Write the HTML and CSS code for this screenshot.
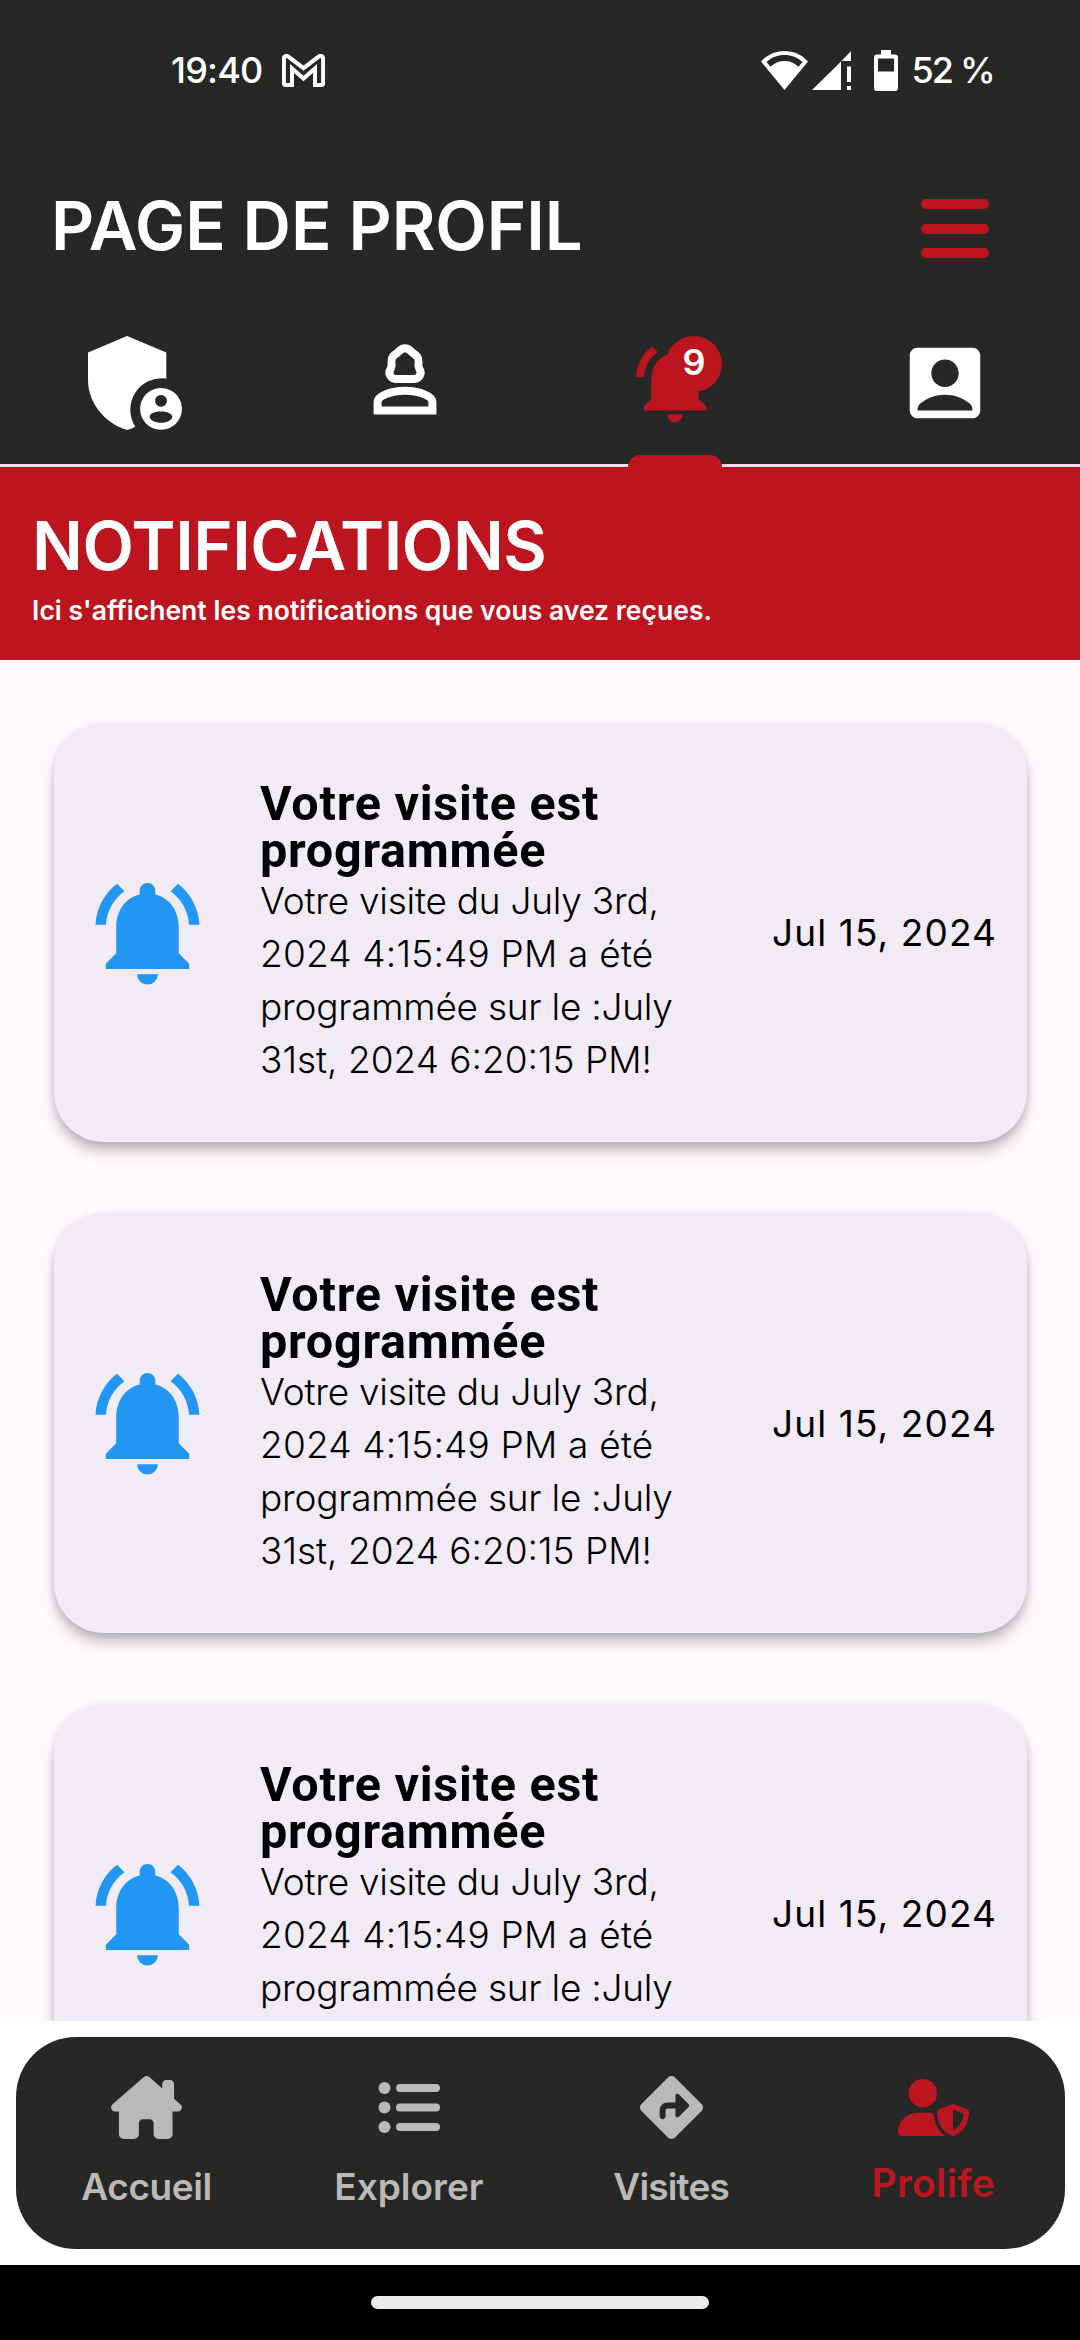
FILE: index.html
```html
<!DOCTYPE html>
<html lang="fr">
<head>
<meta charset="utf-8">
<title>Page de profil</title>
<link rel="stylesheet" href="styles.css">
</head>
<body>
<svg width="0" height="0" class="defs" aria-hidden="true">
  <symbol id="bell" viewBox="0 0 24 24">
    <path d="M7.58 4.08L6.15 2.65C3.75 4.48 2.17 7.3 2.03 10.5h2c.15-2.65 1.51-4.97 3.55-6.42zM19.97 10.5h2c-.15-3.2-1.73-6.02-4.12-7.85l-1.42 1.43c2.02 1.45 3.39 3.77 3.54 6.42zM18 11c0-3.07-1.64-5.64-4.5-6.32V4c0-.83-.67-1.5-1.5-1.5s-1.5.67-1.5 1.5v.68C7.63 5.36 6 7.92 6 11v5l-2 2v1h16v-1l-2-2v-5zM10 20h4a2 2 0 0 1-4 0z"/>
  </symbol>
</svg>
<div class="screen">
  <header class="top">
    <div class="status">
      <div class="status-group">
        <span class="clock">19:40</span>
        <svg class="gmail" viewBox="0 0 43 33"><path d="M4.6 1.9Q1.9 1.9 1.9 5V29Q1.9 31.1 4 31.1H10V14.5L21.5 24.5 33 14.5V31.1H39Q41.1 31.1 41.1 29V5Q41.1 1.9 38.4 1.9L37 2.4 21.5 14.2 6 2.4Z"/></svg>
      </div>
      <div class="status-group">
        <svg class="wifi" viewBox="0 0 47 39"><path fill-rule="evenodd" d="M23.5 39L0 10.5C6 4 14 0 23.5 0S41 4 47 10.5ZM5.5 11L9.5 15.8C13.5 12 18 10 23.5 10S33.500 12 37.500 15.800L41.500 11C36.500 6.500 30.500 4 23.500 4S10.500 6.500 5.500 11Z"/></svg>
        <svg class="signal" viewBox="0 0 39 39"><path d="M0 39L29 10.500V39ZM29.500 10L39 0V10ZM35 15.500h4V31h-4ZM35 35h4v4h-4Z"/></svg>
        <svg class="battery" viewBox="0 0 24 41"><path fill-rule="evenodd" d="M7 0h10v4.500h4a3 3 0 0 1 3 3V38a3 3 0 0 1-3 3H3a3 3 0 0 1-3-3V7.500a3 3 0 0 1 3-3h4ZM4 8.500V21.500H20V8.500Z"/></svg>
        <span class="percent">52 %</span>
      </div>
    </div>
    <div class="appbar">
      <h1 class="page-title">PAGE DE PROFIL</h1>
      <div class="burger"><i></i><i></i><i></i></div>
    </div>
    <nav class="tabs">
      <div class="tab">
        <svg class="tab-icon" viewBox="0 0 94 94"><path d="M39 0L78.300 16.500V42.600A31.500 31.500 0 0 0 47.300 90.800Q43 93 39 94C16 87 0 66 0 44V16.500Z"/><path fill-rule="evenodd" d="M73 52a20.900 20.900 0 1 0 .01 0ZM73 58.900a5.900 5.900 0 1 1-.01 0ZM73 75.500c6 0 11.300 2 11.300 5.200S79 86.800 73 86.800 61.700 84 61.700 80.700 67 75.500 73 75.500Z"/></svg>
      </div>
      <div class="tab">
        <svg class="tab-icon line" viewBox="0 0 94 94"><path d="M47 12.200C50.500 12.200 52 14 54 16.300 59 19.500 61 21.500 60.500 26.500 59.800 30.500 60.500 31 61.500 33 64.500 38 61 43 55.500 43H38.500C33 43 29.500 38 32.500 33 33.500 31 34.200 30.500 33.500 26.500 33 21.500 35 19.500 40 16.300 42 14 43.500 12.200 47 12.200Z"/><path d="M19.600 74.400V66C19.600 60 33 54.700 47 54.700S74.400 60 74.400 66V74.400Z"/></svg>
      </div>
      <div class="tab active">
        <svg class="tab-icon"><use href="#bell"/></svg>
        <span class="badge">9</span>
      </div>
      <div class="tab">
        <svg class="tab-icon" viewBox="0 0 24 24"><path d="M19 3H5c-1.110 0-2 .9-2 2v14c0 1.100.89 2 2 2h14c1.100 0 2-.9 2-2V5c0-1.100-.9-2-2-2zm-7 3c1.930 0 3.500 1.570 3.500 3.500S13.930 13 12 13s-3.500-1.570-3.500-3.500S10.070 6 12 6zm7 13H5v-.23c0-.62.28-1.200.76-1.580C7.470 15.820 9.640 15 12 15s4.530.82 6.240 2.190c.48.38.76.97.76 1.580V19z"/></svg>
      </div>
    </nav>
  </header>

  <section class="banner">
    <h2 class="banner-title">NOTIFICATIONS</h2>
    <p class="banner-text">Ici s'affichent les notifications que vous avez reçues.</p>
  </section>

  <main class="list">
    <article class="card">
      <svg class="card-icon"><use href="#bell"/></svg>
      <div class="card-body">
        <h3 class="card-title">Votre visite est<br>programmée</h3>
        <p class="card-text"><span class="tight">Votre visite du July 3rd,</span><span class="wide">2024 4:15:49 PM a été</span><span class="tight">programmée sur le :July</span><span>31st, 2024 6:20:15 PM!</span></p>
      </div>
      <time class="card-date">Jul 15, 2024</time>
    </article>
    <article class="card">
      <svg class="card-icon"><use href="#bell"/></svg>
      <div class="card-body">
        <h3 class="card-title">Votre visite est<br>programmée</h3>
        <p class="card-text"><span class="tight">Votre visite du July 3rd,</span><span class="wide">2024 4:15:49 PM a été</span><span class="tight">programmée sur le :July</span><span>31st, 2024 6:20:15 PM!</span></p>
      </div>
      <time class="card-date">Jul 15, 2024</time>
    </article>
    <article class="card">
      <svg class="card-icon"><use href="#bell"/></svg>
      <div class="card-body">
        <h3 class="card-title">Votre visite est<br>programmée</h3>
        <p class="card-text"><span class="tight">Votre visite du July 3rd,</span><span class="wide">2024 4:15:49 PM a été</span><span class="tight">programmée sur le :July</span></p>
      </div>
      <time class="card-date">Jul 15, 2024</time>
    </article>
  </main>

  <footer class="dock">
    <nav class="nav">
      <div class="nav-item">
        <svg class="nav-icon" width="71" height="63" viewBox="0 0 576 512"><path d="M543.800 287.600c17 0 32-14 32-32.100c1-9-3-17-11-24L512 185V64c0-17.700-14.300-32-32-32H448c-17.700 0-32 14.300-32 32v36.700L309.500 7c-6-5-14-7-21-7s-15 1-22 8L10 231.500c-7 7-10 15-10 24c0 18 14 32.100 32 32.100h32V472c0 22 18 40 40 40h82c22 0 40-18 40-40V384c0-18 14-32 32-32h56c18 0 32 14 32 32v88c0 22 18 40 40 40h74c22 0 40-18 40-40l-.7-184.400h34.500z"/></svg>
        <span class="nav-label accueil">Accueil</span>
      </div>
      <div class="nav-item">
        <svg class="nav-icon" width="62" height="63" viewBox="0 0 62 63"><circle cx="6.500" cy="12" r="6"/><circle cx="6.500" cy="31.500" r="6"/><circle cx="6.500" cy="51" r="6"/><rect x="18" y="8" width="44" height="8" rx="4"/><rect x="18" y="27.500" width="44" height="8" rx="4"/><rect x="18" y="47" width="44" height="8" rx="4"/></svg>
        <span class="nav-label">Explorer</span>
      </div>
      <div class="nav-item">
        <svg class="nav-icon" width="63" height="63" viewBox="0 0 512 512"><path d="M227.700 11.700c15.600-15.600 40.900-15.600 56.600 0l216 216c15.600 15.600 15.600 40.900 0 56.600l-216 216c-15.600 15.600-40.900 15.600-56.600 0l-216-216c-15.600-15.600-15.600-40.900 0-56.600l216-216zm87.600 137c-4.600-4.600-11.500-5.900-17.400-3.500s-9.900 8.300-9.900 14.800v56H224c-35.300 0-64 28.700-64 64v48c0 13.300 10.700 24 24 24s24-10.700 24-24V280c0-8.800 7.200-16 16-16h64v56c0 6.500 3.900 12.300 9.900 14.800s12.900 1.100 17.400-3.500l80-80c6.200-6.200 6.200-16.400 0-22.600l-80-80z"/></svg>
        <span class="nav-label visites">Visites</span>
      </div>
      <div class="nav-item current">
        <svg class="nav-icon" width="71" height="57" viewBox="0 0 640 512"><path d="M224 256A128 128 0 1 0 224 0a128 128 0 1 0 0 256zm-45.700 48C79.800 304 0 383.800 0 482.300C0 498.700 13.300 512 29.700 512H418.300c1.800 0 3.500-.2 5.300-.5c-76.300-55.100-99.800-141-103.100-200.200c-16.100-4.800-33.100-7.300-50.700-7.300H178.300zm308.800-78.300l-120 48C358 277.400 352 286.200 352 296c0 63.300 25.900 168.800 134.800 214.200c5.900 2.500 12.600 2.500 18.500 0C614.100 464.800 640 359.300 640 296c0-9.800-6-18.600-15.100-22.300l-120-48c-5.700-2.300-12.100-2.300-17.800 0zM591.400 312c-3.900 50.700-27.200 116.700-95.400 149.700V273.800L591.400 312z"/></svg>
        <span class="nav-label">Prolife</span>
      </div>
    </nav>
  </footer>
  <div class="gesture"><div class="pill"></div></div>
</div>
</body>
</html>
```
FILE: styles.css
```css
:root {
  --dark: #272725;
  --red: #bc1520;
  --muted: #bab9b7;
}

* { box-sizing: border-box; }

body {
  margin: 0;
  font-family: "Inter", "Liberation Sans", sans-serif;
}

h1, h2, h3, p { margin: 0; }
svg { display: block; flex: none; fill: currentColor; }
.defs { position: absolute; }

.screen {
  width: 1080px;
  height: 2340px;
  display: flex;
  flex-direction: column;
  overflow: hidden;
  background: #fffbff;
}

/* Header */
.top { background: var(--dark); color: #fff; flex: none; }

.status {
  height: 140px;
  padding: 0 86px 0 171px;
  display: flex;
  align-items: center;
  justify-content: space-between;
  font-size: 36px;
  font-weight: 500;
}
.status-group { display: flex; align-items: center; }
.clock { letter-spacing: -0.8px; margin-right: 20px; }
.percent { letter-spacing: -1.8px; }
.gmail { width: 43px; height: 33px; fill: none; stroke: #fff; stroke-width: 4; }
.wifi { width: 47px; height: 39px; margin-right: 4px; }
.signal { width: 39px; height: 39px; margin-right: 23px; }
.battery { width: 24px; height: 41px; margin-right: 13px; }

.appbar {
  height: 159px;
  padding: 12px 91px 0 51px;
  display: flex;
  align-items: center;
  justify-content: space-between;
}
.page-title { font-size: 67px; font-weight: 600; line-height: 80px; }
.burger { display: flex; flex-direction: column; gap: 14.5px; padding-top: 6px; }
.burger i { width: 68px; height: 10px; border-radius: 5px; background: var(--red); }

.tabs {
  height: 168px;
  display: flex;
  border-top: 1px solid #2a2329;
  border-bottom: 3px solid #e7e0ec;
}
.tab {
  flex: 1;
  position: relative;
  display: flex;
  justify-content: center;
  padding-top: 36px;
}
.tab-icon { width: 94px; height: 94px; }
.line { fill: none; stroke: #fff; stroke-width: 8; }
.active { color: var(--red); }
.active::after {
  content: "";
  position: absolute;
  left: 88px;
  bottom: -3px;
  width: 94px;
  height: 12px;
  border-radius: 12px 12px 0 0;
  background: var(--red);
}
.badge {
  position: absolute;
  left: 126px;
  top: 36px;
  width: 56px;
  height: 56px;
  padding-bottom: 3px;
  border-radius: 50%;
  background: var(--red);
  color: #fff;
  font-size: 36px;
  font-weight: 600;
  line-height: 53px;
  text-align: center;
}

/* Banner */
.banner {
  height: 193px;
  flex: none;
  padding: 38px 32px 0;
  background: var(--red);
  color: #fff;
}
.banner-title { font-size: 67px; font-weight: 600; line-height: 81px; letter-spacing: -0.45px; }
.banner-text { font-size: 26.5px; font-weight: 600; line-height: 48px; letter-spacing: 0.04px; }

/* Notifications */
.list {
  height: 1361px;
  flex: none;
  overflow: hidden;
  padding: 62.5px 53px 0 54px;
  display: flex;
  flex-direction: column;
  gap: 71px;
}
.card {
  height: 419.5px;
  flex: none;
  display: flex;
  align-items: center;
  padding: 0 30px 0 30.5px;
  border-radius: 50px;
  background: #f0ebf5;
  color: #000;
  box-shadow: 0 10px 16px -2px rgba(0, 0, 0, 0.28), 0 2px 8px rgba(0, 0, 0, 0.1);
}
.card-icon { width: 125px; height: 125px; margin-right: 50.5px; color: #2196f3; }
.card-body { flex: 1; height: 306px; padding-top: 1px; white-space: nowrap; }
.card-title {
  font-family: "Roboto", "Liberation Sans", sans-serif;
  font-size: 48.5px;
  font-weight: 700;
  line-height: 47px;
  letter-spacing: 0.75px;
}
.card-text { font-size: 37px; font-weight: 300; line-height: 53px; }
.card-text span { display: block; }
.tight { letter-spacing: -0.25px; }
.wide { letter-spacing: 0.2px; }
.card-date { padding-top: 1px; font-size: 37px; font-weight: 400; letter-spacing: 1.1px; white-space: nowrap; }

/* Bottom navigation */
.dock { height: 244px; flex: none; padding: 16px 15.5px; background: #fff; }
.nav {
  height: 212px;
  display: flex;
  border-radius: 60px;
  background: var(--dark);
  color: var(--muted);
}
.nav-item {
  flex: 1;
  display: flex;
  flex-direction: column;
  align-items: center;
  padding-top: 39px;
}
.nav-label { margin-top: 26px; font-size: 37px; font-weight: 600; line-height: 44px; }
.accueil { letter-spacing: -0.4px; }
.visites { letter-spacing: -0.85px; }
.current { color: var(--red); padding-top: 42px; }
.current .nav-label { font-size: 39px; letter-spacing: 0.35px; margin-top: 25px; }

.gesture {
  flex: 1;
  display: flex;
  justify-content: center;
  padding-top: 31px;
  background: #000;
}
.pill { width: 338px; height: 13px; border-radius: 6.5px; background: #ebebeb; }
```
